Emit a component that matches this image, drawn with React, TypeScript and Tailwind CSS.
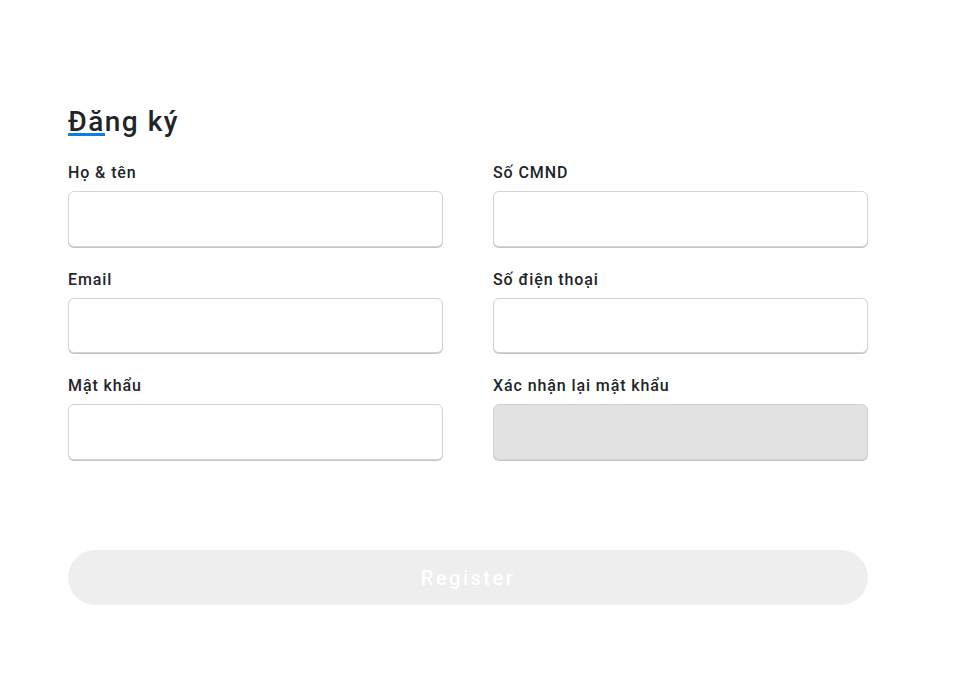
import React from "react";

const fields: { label: string; disabled?: boolean }[] = [
  { label: "Họ & tên" },
  { label: "Số CMND" },
  { label: "Email" },
  { label: "Số điện thoại" },
  { label: "Mật khẩu" },
  { label: "Xác nhận lại mật khẩu", disabled: true },
];

export default function App() {
  return (
    <div
      className="min-h-screen bg-white pl-[68px] pt-[105px]"
      style={{ fontFamily: "Roboto, 'Noto Sans', sans-serif" }}
    >
      <div className="w-[800px]">
        <h1 className="relative inline-block text-[28px] leading-[34px] font-medium tracking-[1.5px] text-[#212529]">
          Đăng ký
          <span className="absolute left-0 bottom-[3px] h-[3px] w-[37px] bg-[#0b7fe0]" />
        </h1>
        <div className="mt-[21px] grid grid-cols-2 gap-x-[50px] gap-y-[20px]">
          {fields.map((f) => (
            <div key={f.label} className="flex flex-col">
              <label className="pt-[1px] text-[16px] leading-[23px] font-medium tracking-[0.9px] text-[#212529]">
                {f.label}
              </label>
              <input
                disabled={f.disabled}
                className={`mt-[7px] h-[55.5px] w-full rounded-[6px] border border-[#d4d4d4] shadow-[0_1px_0_#c6c6c6] outline-none ${
                  f.disabled ? "bg-[#e2e2e2]" : "bg-white"
                }`}
              />
            </div>
          ))}
        </div>
        <button className="mt-[90.5px] flex h-[55px] w-full items-center justify-center rounded-full bg-[#eeeeee] text-[20px] font-medium tracking-[2.5px] text-white">
          Register
        </button>
      </div>
    </div>
  );
}
